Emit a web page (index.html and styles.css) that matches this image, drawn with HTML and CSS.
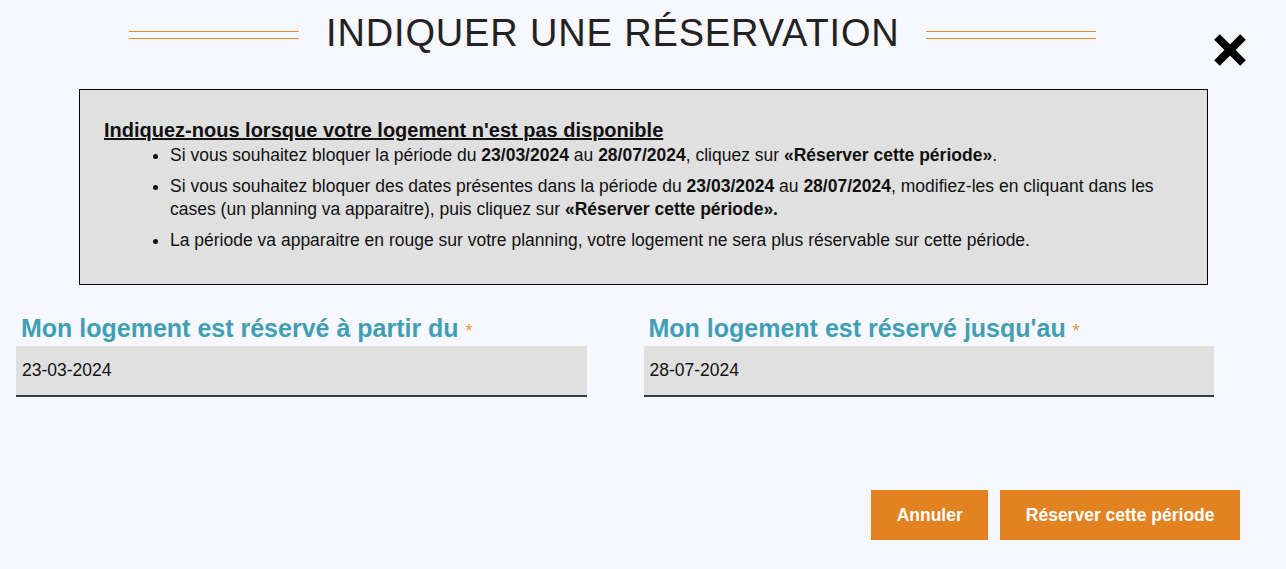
FILE: index.html
```html
<!DOCTYPE html>
<html lang="fr">
<head>
  <meta charset="UTF-8" />
  <title>Indiquer une réservation</title>
  <link rel="stylesheet" href="styles.css">
</head>
<body>

<!-- En-tête -->
<header class="modal-head">
  <span class="deco"></span>
  <h1>INDIQUER UNE RÉSERVATION</h1>
  <span class="deco"></span>
  <button class="close" type="button" aria-label="Fermer">
    <svg viewBox="0 0 34 34" width="34" height="34">
      <path d="M4 4L30 30M30 4L4 30" stroke="#000" stroke-width="8" />
    </svg>
  </button>
</header>

<!-- Explications -->
<div class="notice">
  <h2>Indiquez-nous lorsque votre logement n'est pas disponible</h2>
  <ul>
    <li>Si vous souhaitez bloquer la période du <b>23/03/2024</b> au <b>28/07/2024</b>, cliquez sur <b>«Réserver cette période»</b>.</li>
    <li>Si vous souhaitez bloquer des dates présentes dans la période du <b>23/03/2024</b> au <b>28/07/2024</b>, modifiez-les en cliquant dans les cases (un planning va apparaitre), puis cliquez sur <b>«Réserver cette période».</b></li>
    <li>La période va apparaitre en rouge sur votre planning, votre logement ne sera plus réservable sur cette période.</li>
  </ul>
</div>

<!-- Dates -->
<form class="dates" onsubmit="return false;">
  <div class="field">
    <label for="dateFrom">Mon logement est réservé à partir du <span class="req">*</span></label>
    <input type="text" id="dateFrom" value="23-03-2024">
  </div>
  <div class="field">
    <label for="dateTo">Mon logement est réservé jusqu'au <span class="req">*</span></label>
    <input type="text" id="dateTo" value="28-07-2024">
  </div>
</form>

<div class="actions">
  <button type="button" class="btn">Annuler</button>
  <button type="button" class="btn">Réserver cette période</button>
</div>

</body>
</html>
```

FILE: styles.css
```css
body {
  margin: 0;
  background-color: #f7f8fd;
  font-family: "Liberation Sans", Arial, sans-serif;
  color: #111;
}
.modal-head {
  display: flex;
  align-items: flex-start;
  height: 44px;
  margin-top: 11px;
  padding-left: 129px;
}
.deco {
  width: 170px;
  height: 8px;
  margin-top: 20px;
  box-sizing: border-box;
  border-top: 1px solid #e8892a;
  border-bottom: 1px solid #e8892a;
}
.modal-head h1 {
  margin: 0 26px 0 27px;
  font-size: 38px;
  line-height: 44px;
  font-weight: normal;
  letter-spacing: 0.85px;
  color: #222;
}
.close {
  margin: 22px 39px 0 auto;
  padding: 0;
  border: 0;
  background: none;
  width: 34px;
  height: 34px;
  cursor: pointer;
}
.close svg {
  display: block;
}
.notice {
  width: 1129px;
  box-sizing: border-box;
  margin: 34px 0 0 79px;
  padding: 28px 24px 25px;
  border: 1px solid #000;
  background-color: #e0e0e0;
}
.notice h2 {
  margin: 0;
  font-size: 20px;
  line-height: 24px;
  text-decoration: underline;
}
.notice ul {
  margin: 2px 0 0;
  padding-left: 66px;
  font-size: 17.5px;
  line-height: 23.5px;
}
.notice li {
  margin-bottom: 7px;
}
.dates {
  display: grid;
  grid-template-columns: 1fr 1fr;
  column-gap: 57px;
  margin: 28px 72px 0 16px;
}
.field label {
  display: block;
  padding-left: 5px;
  font-size: 25px;
  line-height: 30px;
  font-weight: bold;
  color: #419fb5;
}
.req {
  font-size: 18px;
  font-weight: normal;
  color: #f0952e;
}
.field input {
  display: block;
  width: 100%;
  height: 51px;
  box-sizing: border-box;
  padding: 0 6px;
  border: 0;
  border-bottom: 2px solid #2e3b4e;
  background-color: #e0e0e0;
  font-family: inherit;
  font-size: 17.5px;
  color: #111;
  outline: none;
}
.actions {
  display: flex;
  justify-content: flex-end;
  gap: 12px;
  margin: 93px 46px 0 0;
}
.btn {
  height: 50px;
  padding: 0 25.5px;
  border: 0;
  background-color: #e38220;
  color: #fff;
  font-family: inherit;
  font-size: 17.5px;
  font-weight: bold;
  cursor: pointer;
}
```
